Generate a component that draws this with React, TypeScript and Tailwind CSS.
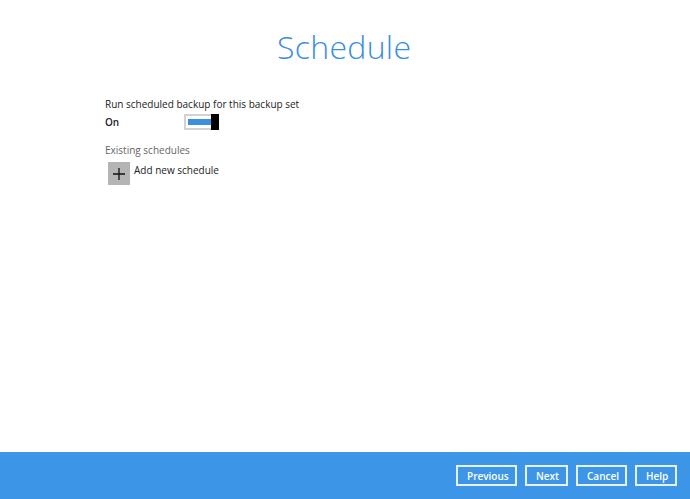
export default function App() {
  return (
    <div
      className="flex h-[499px] w-[690px] flex-col bg-white"
      style={{ fontFamily: '"Open Sans", "Noto Sans", sans-serif' }}
    >
      <div className="flex-1">
        <h1 className="mt-[24px] h-[45px] pl-[277px] text-[32px] font-light leading-[45px] tracking-[0.3px] text-[#3b8ee0]">
          Schedule
        </h1>

        <div className="mt-[28px] pl-[105px] text-[10px] text-[#222]">
          <p className="leading-[14px]">Run scheduled backup for this backup set</p>
          <div className="mt-[2px] flex h-[18px] items-center">
            <span className="w-[79px] font-semibold">On</span>
            <div className="flex h-[16px] items-stretch">
              <div className="flex w-[27px] items-center border-2 border-r-0 border-[#d2d2d2] bg-white pl-[2px]">
                <div className="h-[6px] w-[23px] bg-[#3b8ee0]" />
              </div>
              <div className="w-[8px] bg-black" />
            </div>
          </div>

          <p className="mt-[12px] leading-[14px] text-[#666]">Existing schedules</p>
          <div className="mt-[5px] flex items-start pl-[3px]">
            <div className="flex h-[23px] w-[22px] items-center justify-center bg-[#b4b4b4]">
              <svg width="12" height="12" viewBox="0 0 12 12">
                <path d="M6 0v12M0 6h12" stroke="#111" strokeWidth="1.3" />
              </svg>
            </div>
            <span className="ml-[4px] mt-[1px] leading-[14px]">Add new schedule</span>
          </div>
        </div>
      </div>

      <div className="flex h-[47px] items-center justify-end gap-[8px] bg-[#3d95e8] pr-[13px]">
        {['Previous', 'Next', 'Cancel', 'Help'].map((label) => (
          <button
            key={label}
            className="h-[21px] border-2 border-[#e6f0fb] px-[9px] text-[10px] font-semibold leading-none text-white"
            style={{
              width:
                label === 'Previous' ? 61 : label === 'Next' ? 43 : label === 'Cancel' ? 51 : 42,
            }}
          >
            {label}
          </button>
        ))}
      </div>
    </div>
  );
}
